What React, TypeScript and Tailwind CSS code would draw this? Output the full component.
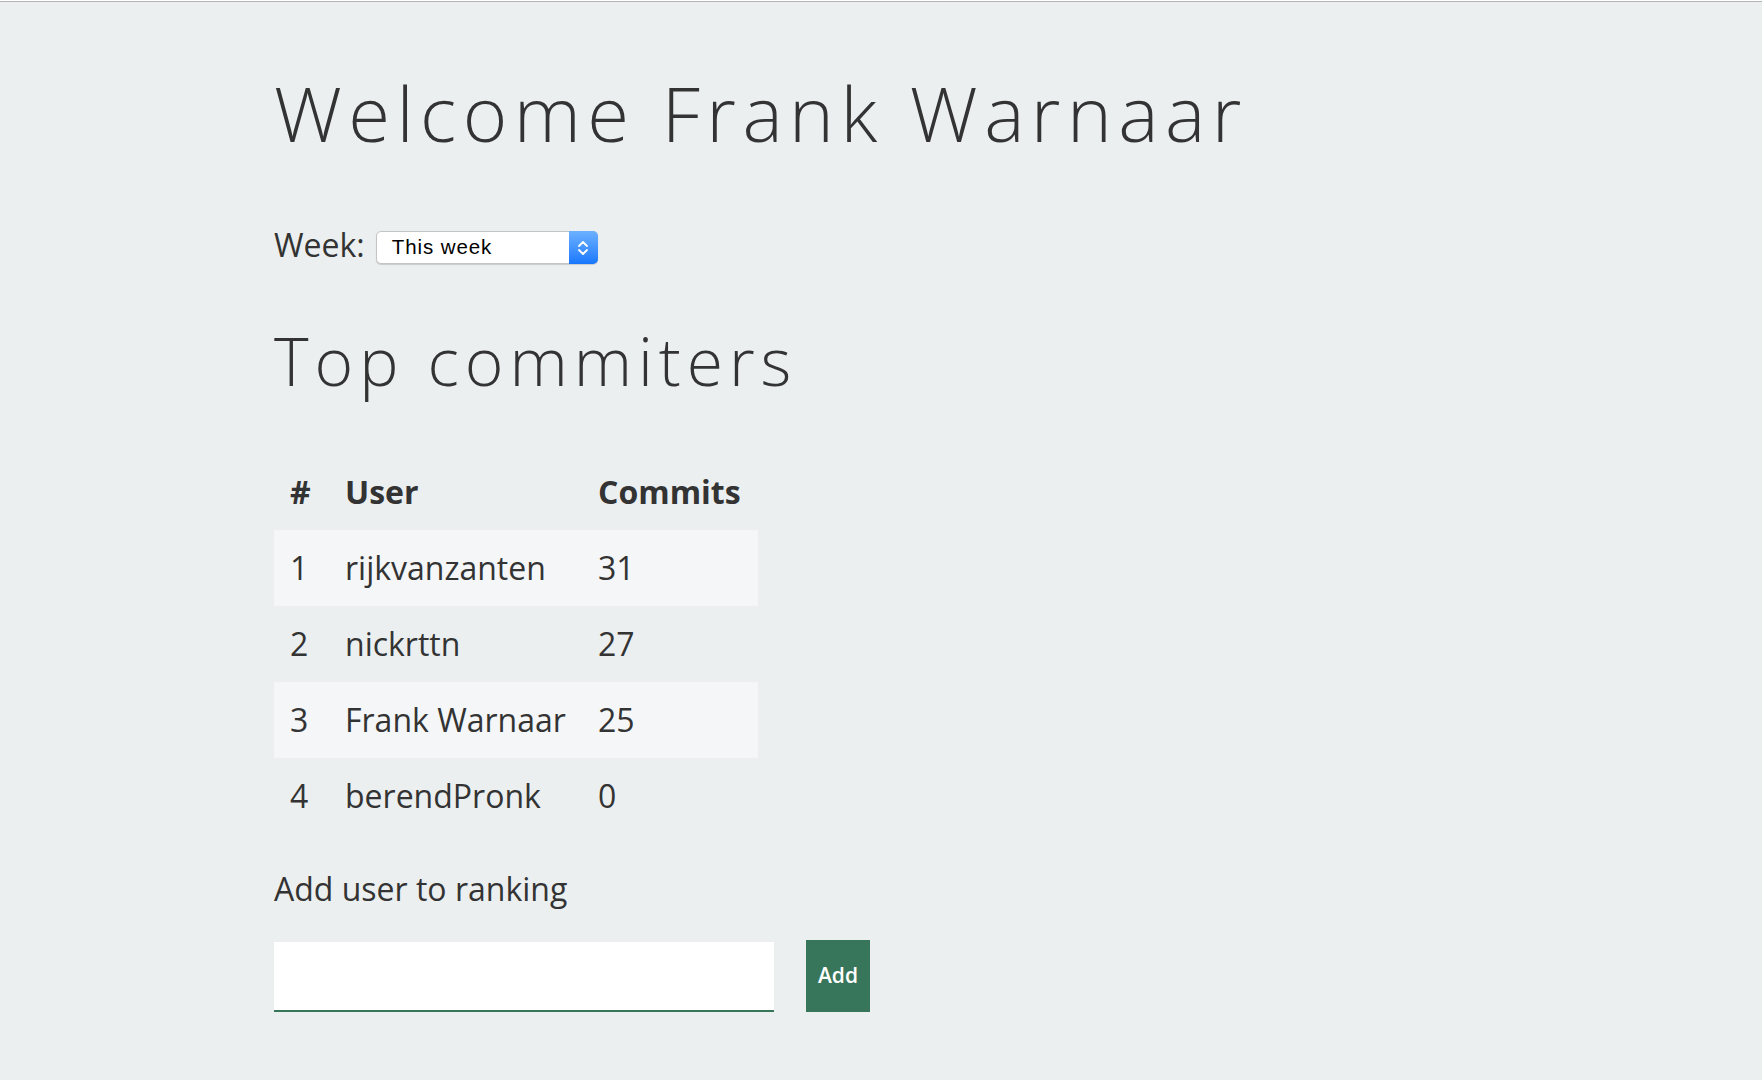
import { useState } from "react";

const RANKING = [
  { pos: 1, user: "rijkvanzanten", commits: 31 },
  { pos: 2, user: "nickrttn", commits: 27 },
  { pos: 3, user: "Frank Warnaar", commits: 25 },
  { pos: 4, user: "berendPronk", commits: 0 },
];

function WeekSelect() {
  return (
    <div className="relative flex h-[33px] w-[222px] items-center rounded-[5px] border border-[#c4c4c4] bg-white shadow-[0_1px_1px_rgba(0,0,0,0.15)]">
      <span className="pl-[15px] font-['Liberation_Sans',Arial,sans-serif] text-[20.5px] leading-none tracking-[0.045em] text-black">
        This week
      </span>
      {/* stepper */}
      <div className="absolute -right-px -top-px -bottom-px flex w-[29px] items-center justify-center rounded-r-[5px] bg-gradient-to-b from-[#6cb1ff] to-[#1677fd]">
        <svg width="12" height="20" viewBox="0 0 12 20" fill="none">
          <path d="M2 8 L6 4 L10 8" stroke="white" strokeWidth="1.8" strokeLinecap="round" strokeLinejoin="round" />
          <path d="M2 12 L6 16 L10 12" stroke="white" strokeWidth="1.8" strokeLinecap="round" strokeLinejoin="round" />
        </svg>
      </div>
    </div>
  );
}

export default function App() {
  const [name, setName] = useState("");

  return (
    <div className="min-h-[1080px] bg-[#ebeff0] font-['Open_Sans',sans-serif] text-[#333]">
      {/* window edge */}
      <div className="mt-px h-px bg-[#b4b4b4]" />

      <main className="pl-[274px] pt-[73px]">
        <h1 className="text-[76px] font-light leading-none tracking-[0.085em]">
          Welcome Frank Warnaar
        </h1>

        <div className="mt-[80px] flex items-start gap-[11px]">
          <span className="text-[32px] leading-[27px]">Week:</span>
          <WeekSelect />
        </div>

        <h2 className="mt-[63px] text-[66px] font-light leading-none tracking-[0.09em]">
          Top commiters
        </h2>

        <table className="mt-[61px] border-collapse text-[32px]">
          <thead>
            <tr className="h-[76px] text-left">
              <th className="w-[55px] px-4 font-bold">#</th>
              <th className="w-[253px] px-4 font-bold">User</th>
              <th className="w-[176px] px-4 font-bold">Commits</th>
            </tr>
          </thead>
          <tbody>
            {RANKING.map((row, i) => (
              <tr key={row.pos} className={`h-[76px] ${i % 2 === 0 ? "bg-[#f4f6f7]" : ""}`}>
                <td className="px-4">{row.pos}</td>
                <td className="px-4">{row.user}</td>
                <td className="px-4">{row.commits}</td>
              </tr>
            ))}
          </tbody>
        </table>

        <p className="mt-[39px] text-[32px] leading-none">Add user to ranking</p>

        <form className="mt-[35px] flex items-end gap-[32px]" onSubmit={(e) => e.preventDefault()}>
          <input
            value={name}
            onChange={(e) => setName(e.target.value)}
            className="h-[70px] w-[500px] border-b-2 border-[#38765c] bg-white px-3 text-[24px] outline-none"
          />
          <button className="h-[72px] w-[64px] bg-[#38765c] text-[21px] font-semibold text-white">
            Add
          </button>
        </form>
      </main>
    </div>
  );
}
